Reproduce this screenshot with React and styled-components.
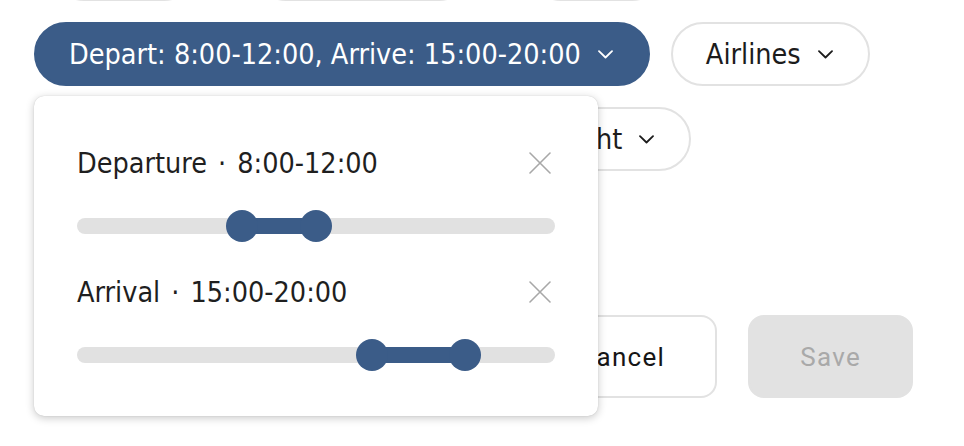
import React from "react";
import styled, { createGlobalStyle } from "styled-components";

const GlobalStyle = createGlobalStyle`
  html, body {
    margin: 0;
    padding: 0;
    background: #ffffff;
    overflow: hidden;
  }
  body {
    font-family: "Liberation Sans Narrow", "DejaVu Sans Condensed", Roboto, sans-serif;
    color: #1c1c1c;
  }
`;

const Page = styled.div`
  width: 964px;
  height: 446px;
  overflow: hidden;
`;

const Filters = styled.div`
  display: flex;
  flex-direction: column;
  gap: 21px;
  margin-top: -63px;
  padding-left: 34px;
`;

const Row = styled.div`
  display: flex;
  align-items: center;
  gap: ${({ $gap }) => $gap || 21}px;
  padding-left: ${({ $indent }) => $indent || 0}px;
`;

const Pill = styled.button`
  display: flex;
  align-items: center;
  gap: 17px;
  height: 64px;
  box-sizing: border-box;
  padding: 0 35px 0 33px;
  border-radius: 32px;
  border: 2px solid ${({ $active }) => ($active ? "#3b5c88" : "#e2e2e2")};
  background: ${({ $active }) => ($active ? "#3b5c88" : "#ffffff")};
  color: ${({ $active }) => ($active ? "#ffffff" : "#1c1c1c")};
  font-family: inherit;
  font-size: 28.5px;
  white-space: nowrap;
  cursor: pointer;
`;

const Anchor = styled.div`
  position: relative;
`;

const Popover = styled.div`
  position: absolute;
  top: calc(100% + 10px);
  left: 0;
  z-index: 5;
  width: 564px;
  box-sizing: border-box;
  padding: 50px 43px 45px;
  background: #ffffff;
  border-radius: 10px;
  box-shadow: 0 2px 8px rgba(0, 0, 0, 0.22), 0 0 1px rgba(0, 0, 0, 0.2);
  display: flex;
  flex-direction: column;
  gap: 33px;
`;

const Section = styled.div`
  display: flex;
  flex-direction: column;
  gap: 30px;
`;

const Header = styled.div`
  display: flex;
  align-items: center;
  justify-content: space-between;
  height: 34px;
`;

const Label = styled.div`
  display: flex;
  align-items: center;
  gap: 11px;
  font-size: 28.5px;
  color: #1f1f1f;
`;

const Close = styled.button`
  display: flex;
  padding: 0;
  margin-right: 4px;
  border: none;
  background: none;
  cursor: pointer;
`;

const Track = styled.div`
  position: relative;
  height: 32px;
  &::before {
    content: "";
    position: absolute;
    left: 0;
    right: 0;
    top: 8px;
    height: 16px;
    border-radius: 8px;
    background: #e1e1e1;
  }
`;

const Range = styled.div`
  position: absolute;
  top: 8px;
  height: 16px;
  background: #3b5c88;
`;

const Thumb = styled.div`
  position: absolute;
  top: 0;
  width: 32px;
  height: 32px;
  margin-left: -16px;
  border-radius: 50%;
  background: #3b5c88;
`;

const Actions = styled.div`
  display: flex;
  justify-content: flex-end;
  gap: 31px;
  margin-top: 144px;
  padding-right: 51px;
`;

const ActionButton = styled.button`
  height: 83px;
  box-sizing: border-box;
  padding: 0 50px;
  border-radius: 16px;
  border: 2px solid #e2e2e2;
  background: ${({ $disabled }) => ($disabled ? "#e2e2e2" : "#ffffff")};
  color: ${({ $disabled }) => ($disabled ? "#a9a9a9" : "#161616")};
  font-family: Roboto, "Liberation Sans", sans-serif;
  font-size: 26px;
  letter-spacing: 1.3px;
  cursor: pointer;
`;

const Chevron = ({ color }) => (
  <svg width="15" height="9" viewBox="0 0 15 9" fill="none">
    <path d="M1 1.2l6.5 6.3L14 1.2" stroke={color} strokeWidth="1.8" strokeLinecap="round" strokeLinejoin="round" />
  </svg>
);

const XIcon = () => (
  <svg width="22" height="22" viewBox="0 0 22 22" fill="none">
    <path d="M1 1l20 20M21 1L1 21" stroke="#a8a8a8" strokeWidth="1.6" strokeLinecap="round" />
  </svg>
);

const MAX = 24;
const INSET = 16;

const RangeSlider = ({ from, to }) => {
  const pos = (v) => `calc(${INSET}px + (100% - ${INSET * 2}px) * ${v / MAX})`;
  return (
    <Track>
      <Range style={{ left: pos(from), width: `calc((100% - ${INSET * 2}px) * ${(to - from) / MAX})` }} />
      <Thumb style={{ left: pos(from) }} />
      <Thumb style={{ left: pos(to) }} />
    </Track>
  );
};

const TimeFilter = ({ title, from, to }) => (
  <Section>
    <Header>
      <Label>
        <span>{title}</span>
        <span>·</span>
        <span>{`${from}:00-${to}:00`}</span>
      </Label>
      <Close>
        <XIcon />
      </Close>
    </Header>
    <RangeSlider from={from} to={to} />
  </Section>
);

export default function App() {
  return (
    <Page>
      <GlobalStyle />
      <Filters>
        <Row $gap={58} $indent={18}>
          <Pill>Stops</Pill>
          <Pill>Price range</Pill>
          <Pill>Bags</Pill>
        </Row>
        <Row>
          <Anchor>
            <Pill $active>
              Depart: 8:00-12:00, Arrive: 15:00-20:00
              <Chevron color="#ffffff" />
            </Pill>
            <Popover>
              <TimeFilter title="Departure" from={8} to={12} />
              <TimeFilter title="Arrival" from={15} to={20} />
            </Popover>
          </Anchor>
          <Pill>
            Airlines
            <Chevron color="#1c1c1c" />
          </Pill>
        </Row>
        <Row $gap={28}>
          <Pill>
            Duration
            <Chevron color="#1c1c1c" />
          </Pill>
          <Pill>
            Connections · Overnight
            <Chevron color="#1c1c1c" />
          </Pill>
        </Row>
      </Filters>
      <Actions>
        <ActionButton>Cancel</ActionButton>
        <ActionButton $disabled>Save</ActionButton>
      </Actions>
    </Page>
  );
}
